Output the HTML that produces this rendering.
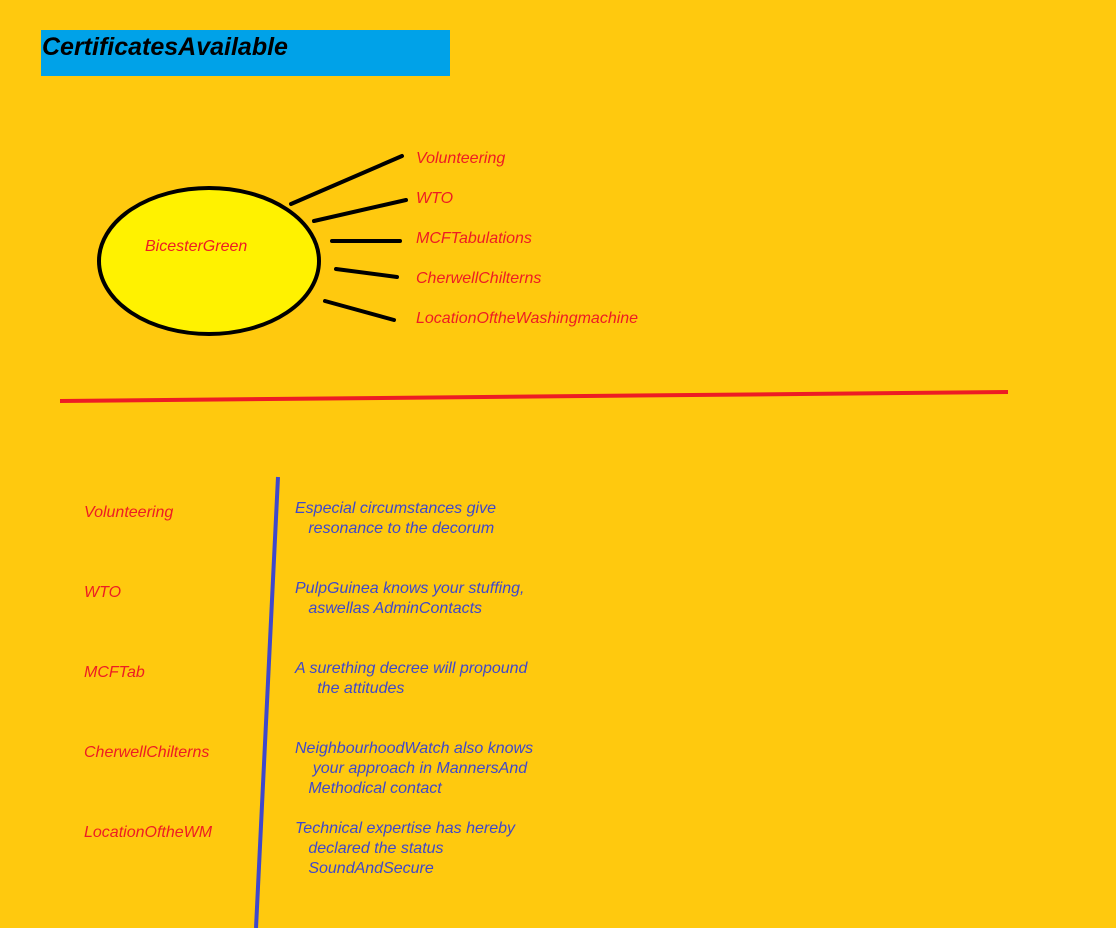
<!DOCTYPE html>
<html><head><style>
body{margin:0;width:1116px;height:928px;background:#FFC90E;position:relative;overflow:hidden;font-family:"Liberation Sans",sans-serif;}
.t{position:absolute;font-style:italic;font-size:16px;line-height:20px;white-space:nowrap;}
.r{color:#ED1C24}.b{color:#3F48CC}
svg{position:absolute;left:0;top:0}
</style></head><body>
<div style="position:absolute;left:41px;top:30px;width:409px;height:46px;background:#00A2E8"></div>
<div style="position:absolute;left:42px;top:33px;font-weight:bold;font-style:italic;font-size:25px;color:#000">CertificatesAvailable</div>
<svg width="1116" height="928">
<ellipse cx="209" cy="261" rx="110" ry="73" fill="#FFF200" stroke="#000" stroke-width="4"/>
<g stroke="#000" stroke-width="4" stroke-linecap="round">
<line x1="291" y1="204" x2="402" y2="156"/>
<line x1="314" y1="221" x2="406" y2="200"/>
<line x1="332" y1="241" x2="400" y2="241"/>
<line x1="336" y1="269" x2="397" y2="277"/>
<line x1="325" y1="301" x2="394" y2="320"/>
</g>
<line x1="60" y1="401" x2="1008" y2="392" stroke="#ED1C24" stroke-width="4"/>
<line x1="278" y1="477" x2="256" y2="928" stroke="#3F48CC" stroke-width="4"/>
</svg>
<div class="t r" style="left:145px;top:237px">BicesterGreen</div>
<div class="t r" style="left:416px;top:149px">Volunteering</div>
<div class="t r" style="left:416px;top:189px">WTO</div>
<div class="t r" style="left:416px;top:229px">MCFTabulations</div>
<div class="t r" style="left:416px;top:269px">CherwellChilterns</div>
<div class="t r" style="left:416px;top:309px">LocationOftheWashingmachine</div>
<div class="t r" style="left:84px;top:503px">Volunteering</div>
<div class="t r" style="left:84px;top:583px">WTO</div>
<div class="t r" style="left:84px;top:663px">MCFTab</div>
<div class="t r" style="left:84px;top:743px">CherwellChilterns</div>
<div class="t r" style="left:84px;top:823px">LocationOftheWM</div>
<div class="t b" style="left:295px;top:499px">Especial circumstances give<br>&nbsp;&nbsp;&nbsp;resonance to the decorum</div>
<div class="t b" style="left:295px;top:579px">PulpGuinea knows your stuffing,<br>&nbsp;&nbsp;&nbsp;aswellas AdminContacts</div>
<div class="t b" style="left:295px;top:659px">A surething decree will propound<br>&nbsp;&nbsp;&nbsp;&nbsp;&nbsp;the attitudes</div>
<div class="t b" style="left:295px;top:739px">NeighbourhoodWatch also knows<br>&nbsp;&nbsp;&nbsp;&nbsp;your approach in MannersAnd<br>&nbsp;&nbsp;&nbsp;Methodical contact</div>
<div class="t b" style="left:295px;top:819px">Technical expertise has hereby<br>&nbsp;&nbsp;&nbsp;declared the status<br>&nbsp;&nbsp;&nbsp;SoundAndSecure</div>
</body></html>
